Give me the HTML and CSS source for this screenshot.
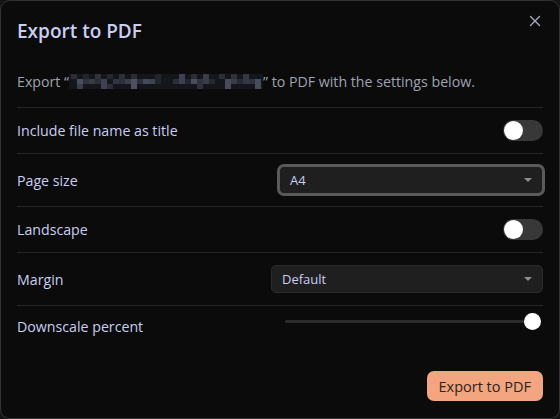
FILE: index.html
```html
<!DOCTYPE html>
<html>

<head>
    <title>Export to PDF</title>
    <link rel="stylesheet" href="styles.css">
</head>

<body>
    <div class="modal">
        <button class="modal-close" type="button" aria-label="Close">
            <svg width="12" height="12" viewBox="0 0 12 12">
                <path d="M1.5 1.5 L10.5 10.5 M10.5 1.5 L1.5 10.5" stroke="currentColor" stroke-width="1.4" stroke-linecap="round" />
            </svg>
        </button>
        <h1 class="modal-title">Export to PDF</h1>
        <p class="modal-desc">Export “<svg class="blur" width="194" height="15" viewBox="0 0 194 15">
                <g>
                    <rect x="0" y="0" width="194" height="15" fill="#15161b" />
                    <rect x="2" y="0" width="6" height="5" fill="#2b2d37" />
                    <rect x="8" y="5" width="6" height="5" fill="#4a4d5c" />
                    <rect x="8" y="10" width="6" height="5" fill="#3a3c48" />
                    <rect x="14" y="0" width="6" height="5" fill="#22232b" />
                    <rect x="14" y="5" width="6" height="5" fill="#2f313c" />
                    <rect x="20" y="5" width="6" height="5" fill="#393b47" />
                    <rect x="26" y="0" width="6" height="5" fill="#30323d" />
                    <rect x="26" y="5" width="6" height="5" fill="#2a2c36" />
                    <rect x="32" y="5" width="6" height="10" fill="#3e4150" />
                    <rect x="38" y="0" width="6" height="5" fill="#25262e" />
                    <rect x="38" y="10" width="6" height="5" fill="#2c2e38" />
                    <rect x="44" y="5" width="6" height="5" fill="#333541" />
                    <rect x="50" y="0" width="6" height="10" fill="#2d2f3a" />
                    <rect x="56" y="5" width="6" height="5" fill="#3c3e4b" />
                    <rect x="62" y="0" width="6" height="5" fill="#2a2b35" />
                    <rect x="62" y="5" width="6" height="10" fill="#4d5060" />
                    <rect x="68" y="5" width="6" height="5" fill="#2b2d37" />
                    <rect x="74" y="5" width="6" height="5" fill="#464958" />
                    <rect x="80" y="5" width="6" height="5" fill="#3f4250" />
                    <rect x="86" y="0" width="6" height="10" fill="#23242c" />
                    <rect x="104" y="5" width="6" height="5" fill="#2c2e39" />
                    <rect x="110" y="0" width="6" height="10" fill="#3e4150" />
                    <rect x="116" y="5" width="6" height="5" fill="#23242c" />
                    <rect x="122" y="0" width="6" height="5" fill="#2a2c36" />
                    <rect x="122" y="5" width="6" height="5" fill="#4a4d5c" />
                    <rect x="128" y="5" width="6" height="10" fill="#30323d" />
                    <rect x="134" y="0" width="6" height="10" fill="#3a3c48" />
                    <rect x="140" y="5" width="6" height="5" fill="#262730" />
                    <rect x="150" y="0" width="6" height="5" fill="#2b2d37" />
                    <rect x="156" y="5" width="6" height="10" fill="#474a59" />
                    <rect x="162" y="0" width="6" height="5" fill="#2f313c" />
                    <rect x="162" y="5" width="6" height="5" fill="#3a3c48" />
                    <rect x="168" y="5" width="6" height="5" fill="#282a33" />
                    <rect x="174" y="0" width="6" height="10" fill="#353744" />
                    <rect x="180" y="5" width="6" height="5" fill="#30323c" />
                    <rect x="186" y="5" width="6" height="10" fill="#484b5a" />
                </g>
            </svg>” to PDF with the settings below.</p>

        <div class="setting">
            <div class="setting-name">Include file name as title</div>
            <div class="setting-control">
                <div class="toggle"></div>
            </div>
        </div>
        <div class="setting">
            <div class="setting-name">Page size</div>
            <div class="setting-control">
                <div class="dropdown dropdown-focus dropdown-wide">A4</div>
            </div>
        </div>
        <div class="setting">
            <div class="setting-name">Landscape</div>
            <div class="setting-control">
                <div class="toggle"></div>
            </div>
        </div>
        <div class="setting">
            <div class="setting-name">Margin</div>
            <div class="setting-control">
                <div class="dropdown dropdown-margin">Default</div>
            </div>
        </div>
        <div class="setting setting-slider">
            <div class="setting-name">Downscale percent</div>
            <div class="setting-control">
                <div class="slider">
                    <div class="slider-track"></div>
                    <div class="slider-thumb"></div>
                </div>
            </div>
        </div>

        <div class="modal-buttons">
            <button class="mod-cta" type="button">Export to PDF</button>
        </div>
    </div>
</body>

</html>
```

FILE: styles.css
```css
/* General */
html {
    height: 100%;
    background-color: #151515;
}

* {
    box-sizing: border-box;
}

body {
    margin: 0;
    height: 100%;
    color: #c9cef3;
    font-family: "Open Sans", "Noto Sans", sans-serif;
    font-size: 14.2px;
}

/* Modal */
.modal {
    position: relative;
    height: 100%;
    background-color: #0b0b0b;
    border: 1px solid #333333;
    border-radius: 10px;
    padding: 16px 16px 0 16px;
}

.modal-close {
    position: absolute;
    top: 11px;
    right: 15px;
    width: 18px;
    height: 18px;
    padding: 3px;
    background: none;
    border: 0;
    color: #a7aabb;
    cursor: pointer;
}

.modal-close svg {
    display: block;
}

.modal-title {
    margin: 0;
    font-size: 19px;
    font-weight: 600;
    line-height: 28px;
    color: #c9cef3;
}

.modal-desc {
    margin: 26px 0 0 0;
    color: #9fa2b2;
    font-size: 14.2px;
    line-height: 22px;
    padding-bottom: 14px;
    border-bottom: 1px solid #262626;
}

.blur {
    vertical-align: -2px;
}

/* Settings rows */
.setting {
    display: flex;
    align-items: center;
    justify-content: space-between;
    padding: 12px 0;
    border-bottom: 1px solid #262626;
}

.setting-slider {
    align-items: flex-start;
    padding-top: 10px;
    border-bottom: 0;
}

.setting-name {
    line-height: 21px;
}

.setting-control {
    display: flex;
    align-items: center;
}

.toggle {
    position: relative;
    width: 40px;
    height: 21px;
    border-radius: 11px;
    background-color: #383838;
}

.toggle::after {
    content: "";
    position: absolute;
    left: 1px;
    top: 1px;
    width: 19px;
    height: 19px;
    border-radius: 50%;
    background-color: #ffffff;
}

.dropdown {
    position: relative;
    height: 28px;
    line-height: 26px;
    padding: 0 28px 0 10px;
    font-size: 13px;
    color: #c9cef3;
    background-color: #1f1f1f;
    border: 1px solid #2c2c2c;
    border-radius: 5px;
}

.dropdown::after {
    content: "";
    position: absolute;
    right: 10px;
    top: 11px;
    border-left: 4px solid transparent;
    border-right: 4px solid transparent;
    border-top: 4px solid #8d8d8d;
}

.dropdown-focus {
    border-color: #5a5a5a;
    box-shadow: 0 0 0 2px #5a5a5a;
}

.dropdown-wide {
    width: 264px;
}

.dropdown-margin {
    width: 272px;
}

/* Slider */
.slider {
    position: relative;
    width: 258px;
    height: 20px;
    margin-top: -5px;
}

.slider-track {
    position: absolute;
    left: 0;
    right: 18px;
    top: 9px;
    height: 3px;
    border-radius: 2px;
    background-color: #2c2c2c;
}

.slider-thumb {
    position: absolute;
    right: 2px;
    top: 2px;
    width: 17px;
    height: 17px;
    border-radius: 50%;
    background-color: #ffffff;
}

/* Buttons */
.modal-buttons {
    display: flex;
    justify-content: flex-end;
    margin-top: 22px;
}

.mod-cta {
    height: 30px;
    padding: 0 12px;
    border: 0;
    border-radius: 7px;
    background-color: #f2a57f;
    color: #2b2420;
    font-family: "Open Sans", "Noto Sans", sans-serif;
    font-size: 14.5px;
    cursor: pointer;
}
```
